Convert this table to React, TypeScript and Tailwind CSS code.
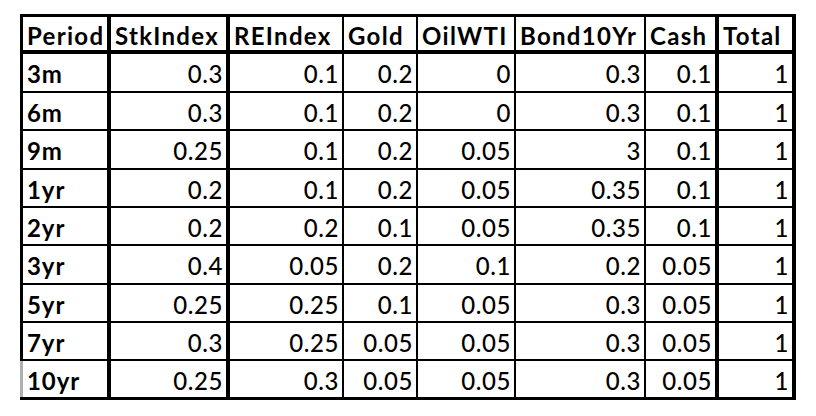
const columns = [
  { name: "Period", cell: "w-[91px] border-l-[3px] border-r-4 justify-start pl-[4px]" },
  { name: "StkIndex", cell: "w-[119px] border-r-4" },
  { name: "REIndex", cell: "w-[114px] border-r-2" },
  { name: "Gold", cell: "w-[74px] border-r-2" },
  { name: "OilWTI", cell: "w-[98px] border-r-2" },
  { name: "Bond10Yr", cell: "w-[130px] border-r-2" },
  { name: "Cash", cell: "w-[73px] border-r-4" },
  { name: "Total", cell: "w-[77px] border-r-4" },
];

const rows: (string | number)[][] = [
  ["3m", 0.3, 0.1, 0.2, 0, 0.3, 0.1, 1],
  ["6m", 0.3, 0.1, 0.2, 0, 0.3, 0.1, 1],
  ["9m", 0.25, 0.1, 0.2, 0.05, 3, 0.1, 1],
  ["1yr", 0.2, 0.1, 0.2, 0.05, 0.35, 0.1, 1],
  ["2yr", 0.2, 0.2, 0.1, 0.05, 0.35, 0.1, 1],
  ["3yr", 0.4, 0.05, 0.2, 0.1, 0.2, 0.05, 1],
  ["5yr", 0.25, 0.25, 0.1, 0.05, 0.3, 0.05, 1],
  ["7yr", 0.3, 0.25, 0.05, 0.05, 0.3, 0.05, 1],
  ["10yr", 0.25, 0.3, 0.05, 0.05, 0.3, 0.05, 1],
];

// row heights include the bottom rule
const rowHeights = [
  "h-[39px] border-b-2",
  "h-[38px] border-b-2",
  "h-[39px] border-b-2",
  "h-[38px] border-b-2",
  "h-[38px] border-b-2",
  "h-[39px] border-b-2",
  "h-[38px] border-b-2",
  "h-[38px] border-b-2",
  "h-[39px] border-b-[3px]",
];

export default function App() {
  return (
    <div className="w-[816px] h-[416px] bg-white pt-[14px] pl-[20px] font-['Lato',sans-serif] text-black">
      <div className="w-[776px] border-t-[3px] border-black">
        <div className="flex h-[37px] border-b-4 border-black">
          {columns.map((c) => (
            <div
              key={c.name}
              className={`${c.cell} border-black flex items-center pl-[4px] pt-[4px] text-[24px] font-bold tracking-[1.3px] leading-none`}
            >
              {c.name}
            </div>
          ))}
        </div>
        {rows.map((r, ri) => {
          const last = ri === rows.length - 1;
          return (
            <div key={r[0]} className={`flex ${rowHeights[ri]} border-black`}>
              {r.map((v, i) => (
                <div
                  key={i}
                  className={`${columns[i].cell} ${
                    i === 0 && last ? "border-l-[#b0b0b0]" : "border-black"
                  } flex items-center pt-[3px] text-[24px] leading-none ${
                    i === 0
                      ? "font-bold tracking-[0.9px]"
                      : "justify-end pr-[3px] tracking-[0.6px] font-medium"
                  }`}
                >
                  {v}
                </div>
              ))}
            </div>
          );
        })}
      </div>
    </div>
  );
}
